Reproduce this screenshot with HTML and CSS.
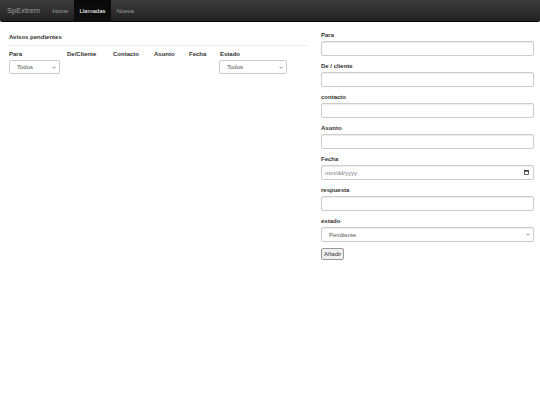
FILE: index.html
```html
<!DOCTYPE html>
<html lang="es">
<head>
<meta charset="utf-8">
<title>SpExtrem</title>
<link rel="stylesheet" href="styles.css">
</head>
<body>
<nav class="navbar">
  <a class="brand" href="#">SpExtrem</a>
  <ul class="nav">
    <li><a href="#">Home</a></li>
    <li class="active"><a href="#">Llamadas</a></li>
    <li><a href="#">Nueva</a></li>
  </ul>
</nav>
<main class="main">
  <section class="left">
    <h4 class="title">Avisos pendientes</h4>
    <div class="table">
      <div class="th">Para</div>
      <div class="th">De/Cliente</div>
      <div class="th">Contacto</div>
      <div class="th">Asunto</div>
      <div class="th">Fecha</div>
      <div class="th">Estado</div>
      <div class="td">
        <div class="selwrap sel-para">
          <select class="sel"><option>Todos</option></select>
          <svg class="chev" viewBox="0 0 8 5" width="4" height="3"><path d="M1 1l3 3 3-3" fill="none" stroke="#555" stroke-width="1.3"/></svg>
        </div>
      </div>
      <div class="td"></div>
      <div class="td"></div>
      <div class="td"></div>
      <div class="td"></div>
      <div class="td">
        <div class="selwrap sel-estado">
          <select class="sel"><option>Todos</option></select>
          <svg class="chev" viewBox="0 0 8 5" width="4" height="3"><path d="M1 1l3 3 3-3" fill="none" stroke="#555" stroke-width="1.3"/></svg>
        </div>
      </div>
    </div>
  </section>
  <section class="right">
    <form class="form">
      <div class="group"><label>Para</label><input class="ctl" type="text"></div>
      <div class="group"><label>De / cliente</label><input class="ctl" type="text"></div>
      <div class="group"><label>contacto</label><input class="ctl" type="text"></div>
      <div class="group"><label>Asunto</label><input class="ctl" type="text"></div>
      <div class="group"><label>Fecha</label>
        <div class="selwrap">
          <input class="ctl" type="text" placeholder="mm/dd/yyyy">
          <svg class="cal" viewBox="0 0 8 8" width="5" height="5"><rect x="0.6" y="0.6" width="6.8" height="6.8" fill="none" stroke="#222" stroke-width="1.1"/><rect x="0.6" y="0.6" width="6.8" height="2" fill="#222"/></svg>
        </div>
      </div>
      <div class="group"><label>respuesta</label><input class="ctl" type="text"></div>
      <div class="group"><label>estado</label>
        <div class="selwrap">
          <select class="ctl sel-ctl"><option>Pendiente</option></select>
          <svg class="chev" viewBox="0 0 8 5" width="4" height="3"><path d="M1 1l3 3 3-3" fill="none" stroke="#555" stroke-width="1.3"/></svg>
        </div>
      </div>
      <button class="btn" type="button">Añadir</button>
    </form>
  </section>
</main>
</body>
</html>
```
FILE: styles.css
```css
* { box-sizing: border-box; }
html, body { margin: 0; background: #fff; }
body {
  font-family: "Liberation Sans", Arial, sans-serif;
  font-size: 6px;
  color: #333;
}
.navbar {
  display: flex;
  align-items: stretch;
  height: 22px;
  background: linear-gradient(#3c3c3c, #222);
  border-radius: 0 0 2px 2px;
  border-bottom: 1px solid #080808;
}
.brand {
  display: flex;
  align-items: center;
  padding: 0 7px 0 7px;
  font-size: 7.5px;
  color: #9d9d9d;
  text-decoration: none;
}
.nav { list-style: none; margin: 0; padding: 0; display: flex; }
.nav li a {
  display: flex;
  align-items: center;
  height: 100%;
  padding: 0 5.5px;
  font-size: 6px;
  color: #9d9d9d;
  text-decoration: none;
}
.nav li.active a {
  background: linear-gradient(#080808, #0f0f0f);
  color: #fff;
}
.main {
  display: flex;
  align-items: flex-start;
  gap: 13px;
  padding: 0 6px 0 9px;
}
.left { width: 299px; padding-top: 11px; }
.title {
  margin: 0;
  font-size: 6px;
  font-weight: bold;
  line-height: 8px;
  padding-bottom: 4px;
  border-bottom: 1px solid #eee;
}
.table {
  display: grid;
  grid-template-columns: 58px 46px 41px 35px 31px auto;
  margin-top: 3px;
}
.th {
  font-weight: bold;
  line-height: 8px;
  padding: 1px 0;
}
.td { padding-top: 1px; }
.selwrap { position: relative; }
.sel-para { width: 51px; }
.sel-estado { width: 68px; margin-left: -1px; }
.sel {
  display: block;
  width: 100%;
  height: 14px;
  appearance: none;
  -webkit-appearance: none;
  font-family: "Liberation Sans", Arial, sans-serif;
  font-size: 6px;
  color: #555;
  border: 1px solid #ccc;
  border-radius: 2px;
  background: #fff;
  padding: 0 0 0 7px;
}
.chev {
  position: absolute;
  right: 4px;
  top: 50%;
  margin-top: -1.5px;
  pointer-events: none;
}
.cal {
  position: absolute;
  right: 5px;
  top: 50%;
  margin-top: -2.5px;
  pointer-events: none;
}
.right { width: 213px; padding-top: 9px; }
.group { margin-bottom: 6px; }
.group label {
  display: block;
  font-weight: bold;
  line-height: 8px;
  margin-bottom: 2px;
}
.ctl {
  display: block;
  width: 100%;
  height: 15px;
  font-family: "Liberation Sans", Arial, sans-serif;
  font-size: 6px;
  color: #555;
  border: 1px solid #ccc;
  border-radius: 2px;
  background: #fff;
  padding: 0 3px;
  box-shadow: inset 0 1px 1px rgba(0,0,0,.075);
}
.ctl::placeholder { color: #777; }
.sel-ctl {
  appearance: none;
  -webkit-appearance: none;
  padding-left: 7px;
}
.btn {
  display: block;
  height: 12px;
  padding: 0 2px;
  font-family: "Liberation Sans", Arial, sans-serif;
  font-size: 6px;
  color: #333;
  background: #efefef;
  border: 1px solid #999;
  border-radius: 2px;
}
```
